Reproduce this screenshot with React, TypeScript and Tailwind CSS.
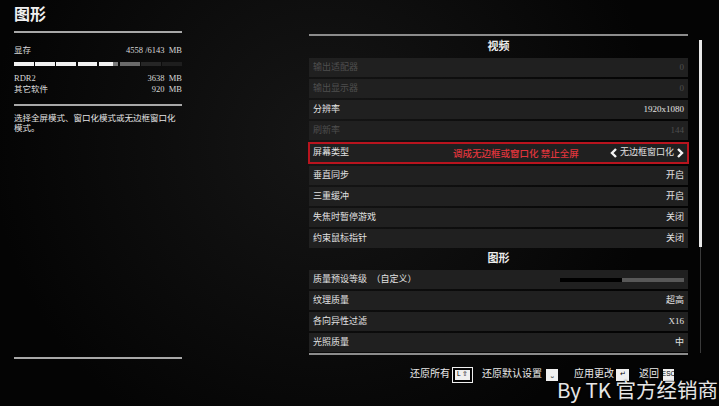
import React from "react";

const serif = "font-['Liberation_Serif','Noto_Sans_CJK_SC',serif]";

type Row = { label: string; value?: string; dim?: boolean };

const videoTop: Row[] = [
  { label: "输出适配器", value: "0", dim: true },
  { label: "输出显示器", value: "0", dim: true },
  { label: "分辨率", value: "1920x1080" },
  { label: "刷新率", value: "144", dim: true },
];

const videoBottom: Row[] = [
  { label: "垂直同步", value: "开启" },
  { label: "三重缓冲", value: "开启" },
  { label: "失焦时暂停游戏", value: "关闭" },
  { label: "约束鼠标指针", value: "关闭" },
];

const graphics: Row[] = [
  { label: "纹理质量", value: "超高" },
  { label: "各向异性过滤", value: "X16" },
  { label: "光照质量", value: "中" },
];

const memSegments = [
  "bg-[#f2f2f2]",
  "bg-[#f2f2f2]",
  "bg-[#f2f2f2]",
  "bg-[#f2f2f2]",
  "bg-[linear-gradient(90deg,#f2f2f2_75%,#7a7a7a_75%)]",
  "bg-[#6a6a6a]",
  "bg-[#262626]",
  "bg-[#1e1e1e]",
];

const SettingRow = ({ row }: { row: Row }) => (
  <div
    className={`h-[19px] flex items-center justify-between px-[4px] bg-[#202020] text-[9px] ${
      row.dim ? "text-[#4e4e4e]" : "text-[#e2e2e2]"
    }`}
  >
    <span>{row.label}</span>
    <span>{row.value}</span>
  </div>
);

const Chevron = ({ left }: { left?: boolean }) => (
  <svg width="8" height="10" viewBox="0 0 8 10">
    <polyline
      points={left ? "6,1 2,5 6,9" : "2,1 6,5 2,9"}
      fill="none"
      stroke="#f4f4f4"
      strokeWidth="2.4"
    />
  </svg>
);

const Key = ({ children, ring, w }: { children: React.ReactNode; ring?: boolean; w: string }) => (
  <span
    className={`inline-flex items-center justify-center h-[12px] ${w} bg-[#f0f0f0] text-black text-[6.5px] leading-none font-['Liberation_Sans',sans-serif] ${
      ring ? "outline outline-1 outline-[#f0f0f0] outline-offset-1 border border-black" : ""
    }`}
  >
    {children}
  </span>
);

export default function App() {
  return (
    <div
      className={`relative w-[719px] h-[406px] overflow-hidden bg-[radial-gradient(circle_at_45%_35%,#161616,#040404_70%)] text-[#d8d8d8] ${serif}`}
    >
      <div className="flex h-[362px]">
        {/* left info column */}
        <div className="ml-[14px] w-[168px] flex flex-col">
          <h1 className="mt-[5px] text-[16px] leading-[20px] text-[#f0f0f0] font-bold">图形</h1>
          <div className="mt-[6px] h-[2px] bg-[#a8a8a8]" />

          <div className="mt-[11px] flex justify-between text-[8.5px] leading-[12px]">
            <span>显存</span>
            <span>4558 /6143&nbsp;&nbsp;MB</span>
          </div>
          <div className="mt-[6px] flex gap-[1.5px] h-[4px]">
            {memSegments.map((c, i) => (
              <div key={i} className={`flex-1 ${c}`} />
            ))}
          </div>
          <div className="mt-[7px] text-[8.5px] leading-[11px]">
            <div className="flex justify-between">
              <span>RDR2</span>
              <span>3638&nbsp;&nbsp;MB</span>
            </div>
            <div className="flex justify-between">
              <span>其它软件</span>
              <span>920&nbsp;&nbsp;MB</span>
            </div>
          </div>
          <div className="mt-[9px] h-[2px] bg-[#a8a8a8]" />
          <p className="mt-[7px] text-[8.5px] leading-[10px] text-[#e4e4e4]">
            选择全屏模式、窗口化模式或无边框窗口化模式。
          </p>

          <div className="mt-auto mb-[3px] h-[2px] bg-[#a8a8a8]" />
        </div>

        {/* right settings panel */}
        <div className="ml-[127px] w-[379px] pt-[34px] flex flex-col">
          <div className="h-[2px] bg-[#8c8c8c]" />
          <div className="h-[21px] flex items-center justify-center text-[11px] font-bold text-[#ececec]">
            视频
          </div>
          <div className="mt-[1px] flex flex-col gap-[2px]">
            {videoTop.map((r) => (
              <SettingRow key={r.label} row={r} />
            ))}
            <div className="h-[22px] flex items-center px-[3px] bg-[#202020] border-2 border-[#b8141e] text-[9px] text-[#e2e2e2] -mx-[1px]">
              <span className="w-[140px]">屏幕类型</span>
              <span className="text-[9.5px] text-[#e0353d] font-medium font-['Noto_Sans_CJK_SC',sans-serif]">
                调成无边框或窗口化 禁止全屏
              </span>
              <span className="ml-auto flex items-center gap-[2px]">
                <Chevron left />
                <span>无边框窗口化</span>
                <Chevron />
              </span>
            </div>
            {videoBottom.map((r) => (
              <SettingRow key={r.label} row={r} />
            ))}
          </div>
          <div className="h-[21px] flex items-center justify-center text-[11px] font-bold text-[#ececec]">
            图形
          </div>
          <div className="mt-[1px] flex flex-col gap-[2px]">
            <div className="h-[19px] flex items-center justify-between px-[4px] bg-[#202020] text-[9px] text-[#e2e2e2]">
              <span>质量预设等级&nbsp;&nbsp;（自定义）</span>
              <div className="flex h-[4px] w-[124px]">
                <div className="w-[62px] bg-black" />
                <div className="flex-1 bg-[#585858]" />
              </div>
            </div>
            {graphics.map((r) => (
              <SettingRow key={r.label} row={r} />
            ))}
          </div>
          <div className="mt-[1px] h-[2px] bg-[#8c8c8c]" />
        </div>

        {/* scrollbar */}
        <div className="ml-[11px] mt-[40px] w-[3px] h-[313px] flex flex-col">
          <div className="h-[207px] bg-[#e8e8e8]" />
          <div className="flex-1 w-[1px] mx-auto bg-[#3a3a3a]" />
        </div>
      </div>

      {/* bottom hints */}
      <div className="h-[22px] flex items-center pl-[410px] text-[10px] text-[#eaeaea]">
        <span>还原所有</span>
        <span className="ml-[4px]">
          <Key ring w="w-[17px]">L ⇧</Key>
        </span>
        <span className="ml-[11px]">还原默认设置</span>
        <span className="ml-[4px]">
          <Key w="w-[12px]">⎵</Key>
        </span>
        <span className="ml-[16px]">应用更改</span>
        <span className="ml-[2px]">
          <Key w="w-[13px]">↵</Key>
        </span>
        <span className="ml-[10px]">返回</span>
        <span className="ml-[4px]">
          <Key w="w-[11px]">ESC</Key>
        </span>
      </div>

      {/* watermark */}
      <div className="absolute left-[557px] top-[377px] whitespace-nowrap text-[20.5px] leading-[24px] text-[#e6e6e6] font-['Noto_Sans_CJK_SC',sans-serif] [text-shadow:0_0_2px_#000]">
        By TK 官方经销商
      </div>
    </div>
  );
}
